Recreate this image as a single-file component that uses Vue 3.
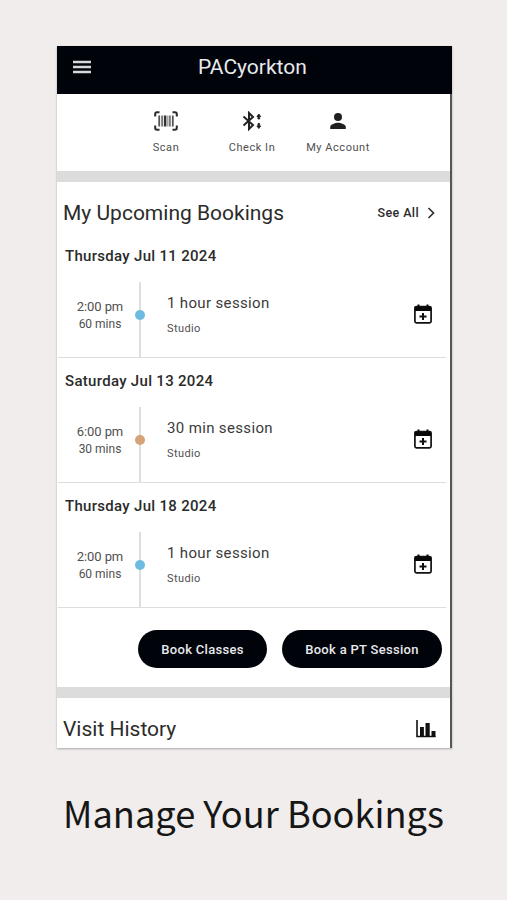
<script setup>
const bookings = [
  { date: 'Thursday Jul 11 2024', time: '2:00 pm', length: '60 mins', name: '1 hour session', place: 'Studio', tone: 'blue' },
  { date: 'Saturday Jul 13 2024', time: '6:00 pm', length: '30 mins', name: '30 min session', place: 'Studio', tone: 'tan' },
  { date: 'Thursday Jul 18 2024', time: '2:00 pm', length: '60 mins', name: '1 hour session', place: 'Studio', tone: 'blue' },
]
</script>

<template>
  <main class="page">
    <div class="phone">
      <header class="bar">
        <svg class="burger" width="18" height="14" viewBox="0 0 18 14"><path d="M0 2h18M0 7h18M0 12h18" stroke="#d6d8dc" stroke-width="2.3" /></svg>
        <h1>PACyorkton</h1>
      </header>
      <nav class="actions">
        <a class="action">
          <svg width="24" height="20" viewBox="0 0 24 20">
            <path d="M1.200 5.500V3Q1.200 1.200 3 1.200h2.500M18.500 1.200H21q1.800 0 1.800 1.800v2.500M22.800 14.500V17q0 1.800-1.800 1.800h-2.500M5.500 18.800H3q-1.800 0-1.800-1.800v-2.500" fill="none" stroke="#2b2b2b" stroke-width="2" />
            <path d="M5.200 4.500v11M18.800 4.500v11" stroke="#555" stroke-width="1.800" />
            <path d="M8.200 4.500v11M15.800 4.500v11" stroke="#777" stroke-width="2" />
            <path d="M11.200 4.500v11" stroke="#333" stroke-width="2.400" />
            <path d="M13.600 4.500v11" stroke="#aaa" stroke-width="1.600" />
          </svg>
          <span>Scan</span>
        </a>
        <a class="action">
          <svg width="20" height="20" viewBox="0 0 20 20">
            <path d="M1.500 5.500 11 14l-4 4V2l4 4-9.500 8.500" fill="none" stroke="#222" stroke-width="2" />
            <path d="M16.800 3 18.700 5.500h-1.100V8h-1.600V5.500h-1.100zM16.800 17.500 18.700 15h-1.100v-2.500h-1.600V15h-1.100z" fill="#222" stroke="#222" stroke-width=".9" />
          </svg>
          <span>Check In</span>
        </a>
        <a class="action">
          <svg width="18" height="20" viewBox="0 0 18 20">
            <circle cx="9" cy="6" r="4" fill="#202020" />
            <path d="M1.200 18v-2c0-2.700 5-4.300 7.800-4.300s7.800 1.600 7.800 4.300v2z" fill="#202020" />
          </svg>
          <span>My Account</span>
        </a>
      </nav>
      <div class="band"></div>
      <section>
        <div class="heading">
          <h2>My Upcoming Bookings</h2>
          <a class="all"><span>See All</span><svg width="8" height="12" viewBox="0 0 8 12"><path d="m1.500 1 5 5-5 5" fill="none" stroke="#333" stroke-width="1.700" /></svg></a>
        </div>
        <article v-for="b in bookings" :key="b.date">
          <h3>{{ b.date }}</h3>
          <div class="row">
            <div class="when"><span class="time">{{ b.time }}</span><span class="length">{{ b.length }}</span></div>
            <div class="line"><i :class="b.tone"></i></div>
            <div class="what"><span class="name">{{ b.name }}</span><span class="place">{{ b.place }}</span></div>
            <svg class="cal" width="18" height="20" viewBox="0 0 18 20">
              <path d="M2.500 2.500h13q1.600 0 1.600 1.600v13.200q0 1.600-1.600 1.600h-13q-1.600 0-1.600-1.600V4.100q0-1.600 1.600-1.600z" fill="none" stroke="#111" stroke-width="1.700" />
              <path d="M1 3h16v4H1zM3.500.6h2V3h-2zM12.500.6h2V3h-2z" fill="#080808" />
              <path d="M9 9v7M5.500 12.500h7" stroke="#111" stroke-width="2" />
            </svg>
          </div>
        </article>
        <div class="buttons">
          <button class="classes">Book Classes</button>
          <button class="pt">Book a PT Session</button>
        </div>
      </section>
      <div class="band"></div>
      <div class="history">
        <h2>Visit History</h2>
        <svg width="20" height="18" viewBox="0 0 20 18">
          <path d="M1 0v16.500h18.500" fill="none" stroke="#111" stroke-width="1.600" />
          <path d="M4 7h3.900v10H4zM9.500 3h4.200v14H9.500zM15.500 11h4v6h-4z" fill="#111" />
        </svg>
      </div>
    </div>
    <p class="caption">Manage Your Bookings</p>
  </main>
</template>

<style>
body { background: #f0edec; }
</style>

<style scoped>
* { box-sizing: border-box; }
.page { width: 507px; height: 900px; padding-top: 46px; overflow: hidden; background: #f0edec; font-family: Roboto, sans-serif; color: #2b2b2b; }
h1, h2, h3, p { margin: 0; font-weight: 400; white-space: nowrap; }
svg { display: block; flex: none; }
.phone { width: 395px; height: 702px; margin-left: 57px; background: #fff; border-right: 2px solid #555; box-shadow: 0 1px 2px #aaa; display: flex; flex-direction: column; }
.bar { height: 48px; flex: none; display: flex; align-items: center; background: #01030b; margin-right: -2px; padding-left: 16px; padding-bottom: 6px; }
.burger { margin-right: 107px; }
h1 { font-size: 21px; color: #e8e9eb; }
.actions { height: 77px; flex: none; display: flex; justify-content: center; padding-top: 17px; padding-right: 3px; }
.action { width: 86px; display: flex; flex-direction: column; align-items: center; gap: 8px; font-size: 11px; line-height: 17px; letter-spacing: .55px; color: #505050; white-space: nowrap; }
.band { height: 11px; flex: none; background: #dcdcdc; }
.heading { height: 50px; display: flex; align-items: center; justify-content: space-between; padding: 11px 15px 0 6px; }
h2 { font-size: 21px; line-height: 26px; }
.all { display: flex; align-items: center; gap: 8px; font-size: 12.5px; font-weight: 500; letter-spacing: .4px; }
h3 { height: 50px; padding-left: 8px; font-size: 15px; line-height: 49px; font-weight: 500; letter-spacing: .3px; }
.row { height: 75px; margin: 0 4px 0 1px; box-shadow: 0 1px #dedede; display: flex; align-items: center; }
.when { width: 81px; padding: 0 0 9px 3px; display: flex; flex-direction: column; align-items: center; color: #505050; }
.time { font-size: 13px; line-height: 18px; letter-spacing: -.1px; }
.length { font-size: 12px; line-height: 17px; }
.line { width: 2px; height: 75px; background: #dedede; display: flex; align-items: center; justify-content: center; padding-bottom: 10px; }
.line i { width: 10px; height: 10px; flex: none; border-radius: 50%; }
.blue { background: #6dbbe0; }
.tan { background: #d6a277; }
.what { flex: 1; padding: 0 0 11px 26px; display: flex; flex-direction: column; gap: 9px; }
.name { font-size: 15px; line-height: 20px; letter-spacing: .35px; color: #3b3b3b; }
.place { font-size: 11px; line-height: 14px; letter-spacing: .4px; color: #505050; }
.cal { margin: 0 14px 12px 0; }
.buttons { height: 80px; padding: 4px 8px 0 0; display: flex; justify-content: flex-end; align-items: center; gap: 15px; }
button { height: 38px; padding: 0; border: 0; border-radius: 19px; background: #01030b; color: #e8e9ec; font: 500 13px Roboto, sans-serif; letter-spacing: .3px; white-space: nowrap; }
.classes { width: 129px; }
.pt { width: 160px; }
.history { flex: 1; display: flex; align-items: center; justify-content: space-between; padding: 12px 14px 0 6px; }
.caption { margin-top: 34px; text-align: center; font: 400 36.2px/60px "Noto Sans CJK SC", sans-serif; color: #161616; }
</style>
